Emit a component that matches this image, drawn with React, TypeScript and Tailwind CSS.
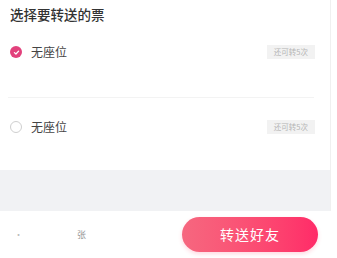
import React from 'react';

const font = { fontFamily: '"Noto Sans CJK SC", "Noto Sans", sans-serif' };

const TicketRow = ({ checked }: { checked: boolean }) => (
  <div className="flex items-center h-[28px] pl-[10px] pr-[15px]">
    {checked ? (
      <span className="flex items-center justify-center w-[12px] h-[12px] rounded-full bg-[#e2417c]">
        <svg width="7" height="7" viewBox="0 0 10 10" fill="none">
          <path d="M2 5.2 L4.2 7.2 L8 3" stroke="#fff" strokeWidth="1.8" strokeLinecap="round" strokeLinejoin="round" />
        </svg>
      </span>
    ) : (
      <span className="w-[12px] h-[12px] rounded-full border border-[#cfcfcf] bg-white" />
    )}
    <span className="ml-[9px] text-[12px] leading-none text-[#444]">无座位</span>
    <span className="ml-auto bg-[#f2f2f2] text-[#b5b5b5] text-[7.5px] leading-none px-[7px] py-[3.5px]">
      还可转5次
    </span>
  </div>
);

export default function App() {
  return (
    <div className="w-[337px] h-[258px] bg-white flex flex-col overflow-hidden" style={font}>
      <div className="flex flex-1 min-h-0">
        <div className="w-[331px] flex flex-col border-r border-[#f0f0f0]">
          <div className="pt-[5px] pl-[10px] text-[13.5px] font-medium text-[#333] leading-[18px]">
            选择要转送的票
          </div>
          <div className="mt-[15px]">
            <TicketRow checked />
          </div>
          <div className="mt-[31px] mx-[8px] mr-[16px] h-px bg-[#f3f3f3]" />
          <div className="mt-[15px]">
            <TicketRow checked={false} />
          </div>
          <div className="mt-auto h-[41px] bg-[#f1f2f4]" />
        </div>
      </div>
      <div className="h-[47px] flex items-center shrink-0">
        <span className="ml-[14px] text-[9px] text-[#bbb]">·</span>
        <span className="ml-[54px] text-[9px] text-[#999]">张</span>
        <button
          type="button"
          className="ml-auto mr-[19px] w-[136px] h-[35px] rounded-full bg-gradient-to-r from-[#f6677f] to-[#ff2a68] text-white text-[14px] tracking-[1px] shadow-[0_2px_4px_rgba(255,60,100,0.2)]"
        >
          转送好友
        </button>
      </div>
    </div>
  );
}
